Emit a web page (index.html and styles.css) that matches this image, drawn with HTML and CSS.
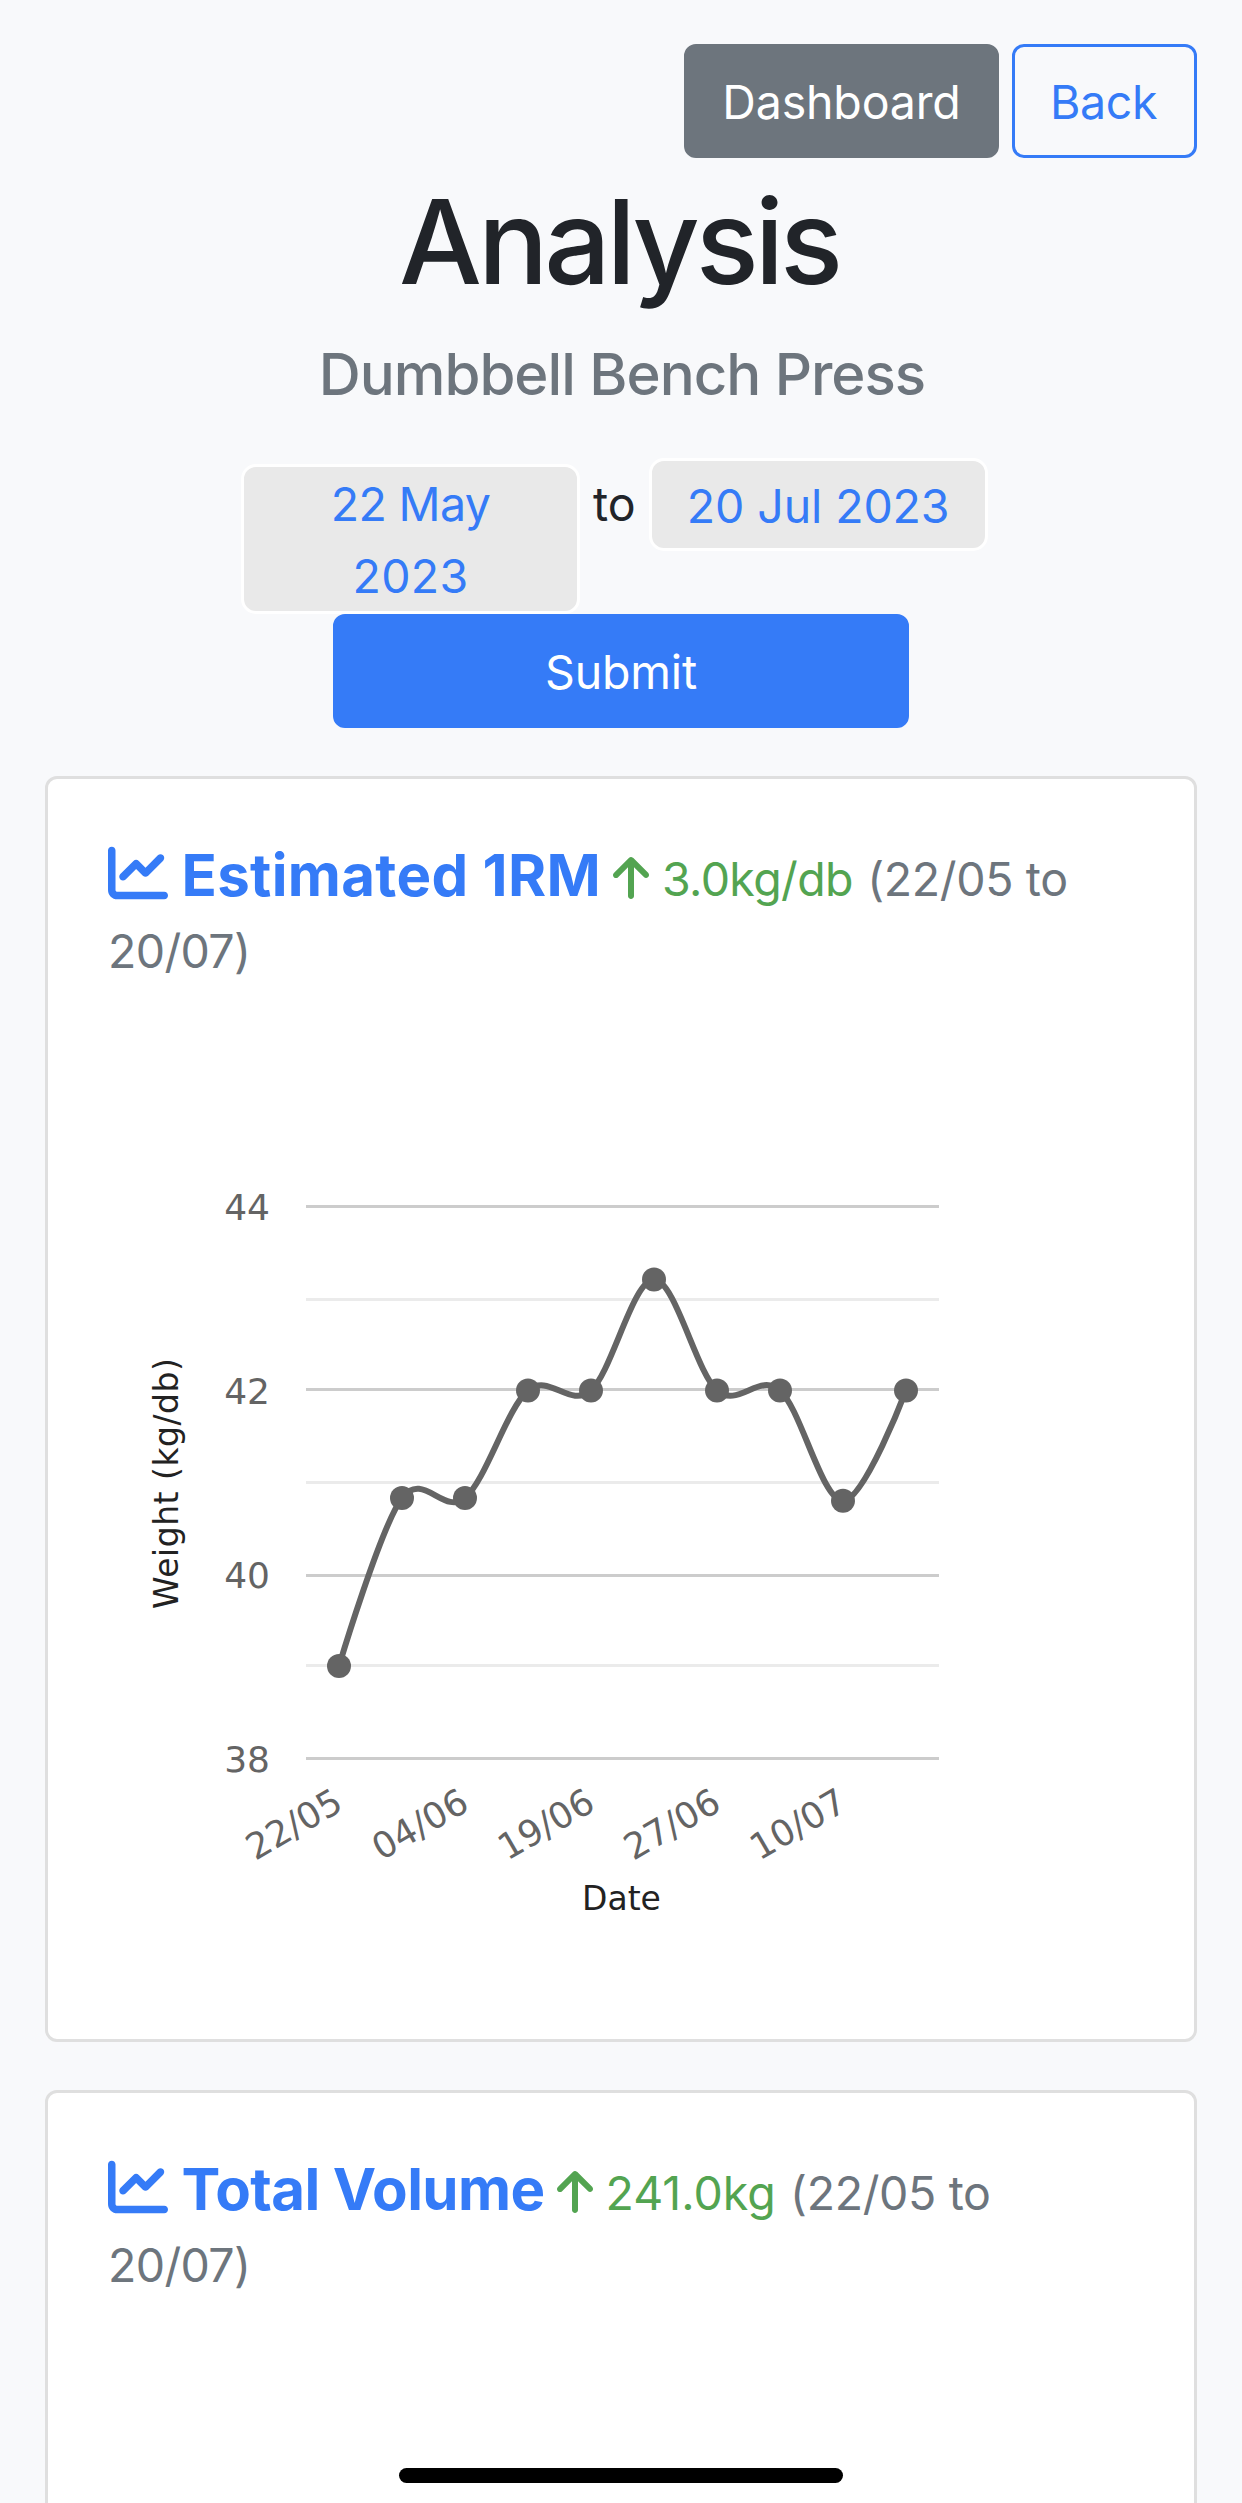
FILE: index.html
```html
<!DOCTYPE html>
<html lang="en">
<head>
<meta charset="utf-8">
<title>Analysis</title>
<link rel="stylesheet" href="styles.css">
</head>
<body>
<svg class="sprite" aria-hidden="true">
  <symbol id="chart-line" viewBox="0 0 512 512"><path fill="currentColor" d="M64 64c0-17.7-14.3-32-32-32S0 46.3 0 64V400c0 44.2 35.8 80 80 80H480c17.7 0 32-14.3 32-32s-14.3-32-32-32H80c-8.8 0-16-7.2-16-16V64zm406.6 86.600c12.500-12.500 12.500-32.800 0-45.300s-32.800-12.500-45.300 0L320 210.700l-57.400-57.400c-12.500-12.500-32.800-12.500-45.300 0l-112 112c-12.500 12.500-12.500 32.800 0 45.300s32.800 12.500 45.300 0L240 221.300l57.400 57.400c12.500 12.500 32.800 12.500 45.300 0l128-128z"/></symbol>
  <symbol id="arrow-up" viewBox="0 0 384 512"><path fill="currentColor" d="M214.600 41.400c-12.500-12.500-32.800-12.500-45.300 0l-160 160c-12.500 12.500-12.500 32.800 0 45.300s32.800 12.500 45.300 0L160 141.200V448c0 17.700 14.300 32 32 32s32-14.300 32-32V141.200L329.400 246.600c12.500 12.500 32.800 12.500 45.300 0s12.500-32.800 0-45.300l-160-160z"/></symbol>
</svg>
<nav class="toolbar">
  <a class="btn btn-secondary">Dashboard</a>
  <a class="btn btn-outline">Back</a>
</nav>
<header class="heading">
  <h1>Analysis</h1>
  <h2>Dumbbell Bench Press</h2>
</header>
<form class="range">
  <div class="dates">
    <span class="date date-from">22 May<br><span class="year">2023</span></span>
    <span class="to">to</span>
    <span class="date date-until">20 Jul 2023</span>
  </div>
  <button class="btn btn-primary" type="button">Submit</button>
</form>
<main>
  <section class="card">
    <div class="title">
      <svg class="icon-chart"><use href="#chart-line"/></svg>
      <h3>Estimated 1RM</h3>
      <svg class="icon-arrow"><use href="#arrow-up"/></svg>
      <span class="delta tight">3.0kg/db</span>
      <span class="period">(22/05 to</span>
    </div>
    <div class="period-end">20/07)</div>
    <svg class="chart" viewBox="108 987 1026 992">
      <g class="minor">
        <rect x="306" y="1298" width="633" height="3"/>
        <rect x="306" y="1481" width="633" height="3"/>
        <rect x="306" y="1664" width="633" height="3"/>
      </g>
      <g class="major">
        <rect x="306" y="1205" width="633" height="3"/>
        <rect x="306" y="1388" width="633" height="3"/>
        <rect x="306" y="1574" width="633" height="3"/>
        <rect x="306" y="1757" width="633" height="3"/>
      </g>
      <path class="series" d="M339 1666C339 1666 381 1526 402 1498S444 1516 465 1498S507 1408.400 528 1390.400S570 1408.900 591 1390.400S633 1279.600 654 1279.600S696 1371.900 717 1390.400S759 1372 780 1390.400S822 1500.800 843 1500.800S906 1390.400 906 1390.400"/>
      <g class="points">
        <circle cx="339" cy="1666" r="12"/><circle cx="402" cy="1498" r="12"/><circle cx="465" cy="1498" r="12"/><circle cx="528" cy="1390.4" r="12"/><circle cx="591" cy="1390.4" r="12"/><circle cx="654" cy="1279.6" r="12"/><circle cx="717" cy="1390.4" r="12"/><circle cx="780" cy="1390.4" r="12"/><circle cx="843" cy="1500.8" r="12"/><circle cx="906" cy="1390.4" r="12"/>
      </g>
      <g class="ticks">
        <text x="270" y="1220">44</text><text x="270" y="1404">42</text><text x="270" y="1588">40</text><text x="270" y="1772">38</text>
        <text transform="translate(345 1809) rotate(-30)">22/05</text>
        <text transform="translate(471 1809) rotate(-30)">04/06</text>
        <text transform="translate(597 1809) rotate(-30)">19/06</text>
        <text transform="translate(723 1809) rotate(-30)">27/06</text>
        <text transform="translate(849 1809) rotate(-30)">10/07</text>
      </g>
      <text class="axis" x="582" y="1910">Date</text>
      <text class="axis wide" transform="translate(178 1609) rotate(-90)">Weight (kg/db)</text>
    </svg>
  </section>
  <section class="card">
    <div class="title">
      <svg class="icon-chart"><use href="#chart-line"/></svg>
      <h3 class="tight">Total Volume</h3>
      <svg class="icon-arrow"><use href="#arrow-up"/></svg>
      <span class="delta">241.0kg</span>
      <span class="period">(22/05 to</span>
    </div>
    <div class="period-end">20/07)</div>
  </section>
</main>
<div class="home-bar"></div>
</body>
</html>
```
FILE: styles.css
```css
* { box-sizing: border-box; }
html { overflow: hidden; }
body {
  margin: 0;
  height: 2503px;
  overflow: hidden;
  background: #f8f9fb;
  color: #212429;
  font: 400 46.5px/72px Inter, sans-serif;
}
h1, h2, h3 { margin: 0; }
.sprite { display: none; }
.toolbar {
  display: flex;
  justify-content: flex-end;
  gap: 13px;
  padding: 44px 45px 0;
}
.btn {
  display: block;
  height: 114px;
  padding: 19px 0 17px;
  border: 3px solid transparent;
  border-radius: 12px;
  font: inherit;
  letter-spacing: -0.17px;
  text-align: center;
}
.btn-secondary { width: 315px; background: #6d757d; border-color: #6d757d; color: #fff; }
.btn-outline { width: 185px; border-color: #357bf7; color: #357bf7; letter-spacing: -0.37px; padding-right: 2px; }
.btn-primary { width: 576px; margin: 0 auto; background: #357bf7; border-color: #357bf7; color: #fff; }
.heading { text-align: center; }
h1 {
  margin-top: 12px;
  padding-right: 4px;
  font-size: 117px;
  font-weight: 500;
  line-height: 144px;
  letter-spacing: -4.12px;
}
h2 {
  margin-top: 24px;
  padding-left: 2px;
  color: #6d757d;
  font-size: 58.2px;
  font-weight: 500;
  letter-spacing: -1.02px;
}
.range { margin-top: 48px; }
.dates { display: flex; align-items: flex-start; padding-left: 241px; }
.date {
  width: 339px;
  border: 3px solid #fff;
  border-radius: 15px;
  background: #e9e9e9;
  color: #357bf7;
  text-align: center;
  letter-spacing: -0.12px;
}
.date-from { height: 150px; margin-top: 6px; padding-top: 1px; letter-spacing: -0.65px; }
.year { letter-spacing: 0.3px; }
.date-until { height: 93px; padding-top: 9px; }
.to { margin: 10px 13px 0; }
main { display: flex; flex-direction: column; gap: 48px; padding: 48px 45px 0; }
.card {
  height: 1266px;
  padding: 60px;
  border: 3px solid #dfdfdf;
  border-radius: 12px;
  background: #fff;
}
.title { display: flex; align-items: baseline; height: 76px; white-space: nowrap; }
.icon-chart { flex: none; align-self: flex-start; width: 60px; height: 60px; margin-top: 4px; color: #357bf7; }
.icon-arrow { flex: none; align-self: flex-start; width: 36px; height: 48px; margin: 15px 13px 0 12px; color: #53a451; }
h3 { margin-left: 13.5px; color: #357bf7; font-size: 58.2px; font-weight: 700; letter-spacing: 0.33px; }
h3.tight { letter-spacing: -0.6px; }
.delta { color: #53a451; }
.delta.tight { letter-spacing: -0.64px; }
.period { margin-left: 14.3px; color: #6d757d; letter-spacing: -0.36px; }
.period-end { color: #6d757d; letter-spacing: -0.64px; }
.chart { display: block; width: 1026px; height: 992px; font-family: "DejaVu Sans", sans-serif; }
.minor { fill: #ebebeb; }
.major { fill: #ccc; }
.series { fill: none; stroke: #646464; stroke-width: 6; }
.points { fill: #646464; }
.ticks { fill: #646464; font-size: 36px; text-anchor: end; }
.axis { fill: #222; font-size: 33px; }
.wide { letter-spacing: 0.51px; }
.home-bar {
  position: absolute;
  left: 399px;
  top: 2468px;
  width: 444px;
  height: 15px;
  border-radius: 8px;
  background: #000;
}
```
